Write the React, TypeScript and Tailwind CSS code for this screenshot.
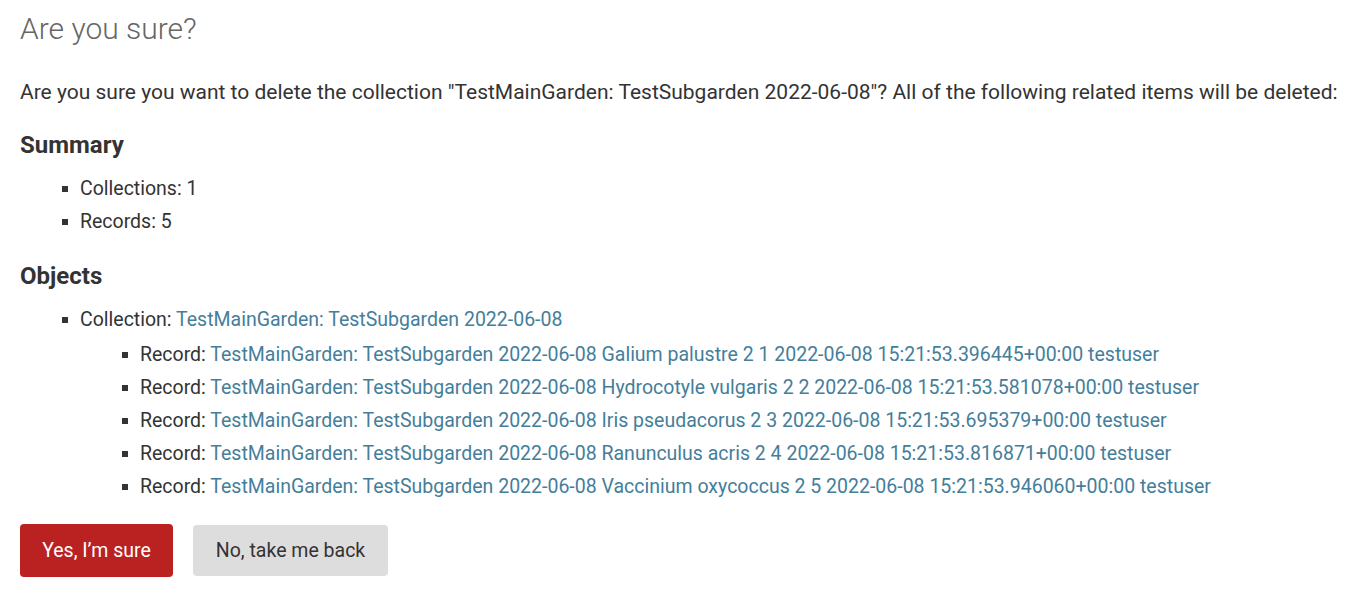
import React from "react";

const records = [
  "Galium palustre 2 1 2022-06-08 15:21:53.396445+00:00 testuser",
  "Hydrocotyle vulgaris 2 2 2022-06-08 15:21:53.581078+00:00 testuser",
  "Iris pseudacorus 2 3 2022-06-08 15:21:53.695379+00:00 testuser",
  "Ranunculus acris 2 4 2022-06-08 15:21:53.816871+00:00 testuser",
  "Vaccinium oxycoccus 2 5 2022-06-08 15:21:53.946060+00:00 testuser",
];

function Bullet() {
  return <span className="absolute left-[-18px] top-[14px] h-[6px] w-[6px] bg-[#333]" />;
}

function Item({ children }: { children: React.ReactNode }) {
  return (
    <li className="relative h-[33px] whitespace-nowrap leading-[33px]">
      <Bullet />
      {children}
    </li>
  );
}

export default function App() {
  return (
    <div className="bg-white px-5 pt-[8px] pb-6 text-[19.5px] text-[#333]" style={{ fontFamily: "Roboto, 'Noto Sans', sans-serif" }}>
      <h1 className="text-[30px] font-light leading-[42px] text-[#666]">Are you sure?</h1>
      <p className="mt-[29px] whitespace-nowrap text-[21px] leading-[26px]">
        Are you sure you want to delete the collection "TestMainGarden: TestSubgarden 2022-06-08"? All of the following related items will be deleted:
      </p>
      <h2 className="mt-[26px] text-[24px] font-bold leading-[28px]">Summary</h2>
      <ul className="mt-[13px] pl-[60px]">
        <Item>Collections: 1</Item>
        <Item>Records: 5</Item>
      </ul>
      <h2 className="mt-[24px] text-[24px] font-bold leading-[28px]">Objects</h2>
      <ul className="mt-[13px] pl-[60px]">
        <Item>
          Collection: <a className="text-[#447e9b]">TestMainGarden: TestSubgarden 2022-06-08</a>
        </Item>
        <li>
          <ul className="pl-[60px] pt-[2px]">
            {records.map((r) => (
              <Item key={r}>
                Record: <a className="text-[#447e9b]">TestMainGarden: TestSubgarden 2022-06-08 {r}</a>
              </Item>
            ))}
          </ul>
        </li>
      </ul>
      <div className="mt-[21px] flex items-center gap-5">
        <button className="h-[53px] w-[153px] rounded bg-[#ba2121] text-[19.5px] text-white">Yes, I’m sure</button>
        <button className="h-[51px] w-[195px] rounded bg-[#dddddd] text-[19.5px] text-[#333]">No, take me back</button>
      </div>
    </div>
  );
}
